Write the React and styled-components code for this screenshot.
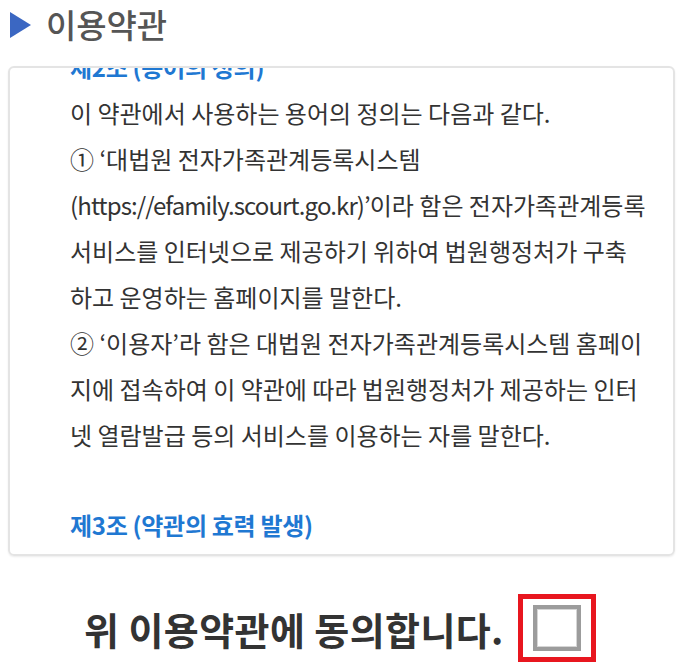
import React, { useEffect, useRef } from "react";
import styled, { createGlobalStyle } from "styled-components";

const GlobalStyle = createGlobalStyle`
  html, body {
    margin: 0;
    padding: 0;
    background: #fff;
  }
  body {
    font-family: "Noto Sans CJK KR", "Noto Sans", sans-serif;
    color: #333;
  }
`;

const Page = styled.div`
  width: 680px;
  height: 670px;
  overflow: hidden;
  display: flex;
  flex-direction: column;
`;

const Header = styled.div`
  display: flex;
  align-items: center;
  height: 50px;
  padding-left: 10px;
`;

// 파란 삼각형 마커
const Marker = styled.span`
  width: 0;
  height: 0;
  border-top: 13px solid transparent;
  border-bottom: 13px solid transparent;
  border-left: 21px solid #3b67c2;
  margin-right: 15px;
`;

const Title = styled.h1`
  margin: 0 0 2px;
  font-size: 33px;
  font-weight: 500;
  color: #555;
  letter-spacing: -0.1px;
`;

const TermsBox = styled.div`
  position: relative;
  margin: 16px 5px 0 8px;
  height: 486px;
  border: 2px solid #e4e4e4;
  border-radius: 6px;
  box-shadow: 0 1px 2px rgba(0, 0, 0, 0.08);
  overflow-y: auto;
  padding: 0 20px 0 60px;
  scrollbar-width: none;
  &::-webkit-scrollbar {
    display: none;
  }
`;

const Article = styled.section`
  & + & {
    margin-top: 44px;
  }
`;

const ArticleTitle = styled.h2`
  margin: 0;
  font-size: 24px;
  font-weight: 700;
  line-height: 46px;
  color: #1f78d2;
  letter-spacing: -0.3px;
`;

const Line = styled.div`
  font-size: 24px;
  line-height: 46px;
  color: #333;
  letter-spacing: 0;
  white-space: nowrap;
`;

// 주소 부분은 좁게 표시
const Url = styled.span`
  letter-spacing: -0.9px;
`;

const AgreeRow = styled.div`
  display: flex;
  align-items: center;
  justify-content: center;
  margin-top: 38px;
  gap: 14px;
`;

const AgreeText = styled.span`
  font-size: 38px;
  font-weight: 700;
  color: #333;
  letter-spacing: 0.4px;
`;

// 강조 표시된 빨간 테두리
const Highlight = styled.label`
  display: flex;
  align-items: center;
  justify-content: center;
  width: 68px;
  height: 58px;
  border: 5px solid #e8161f;
  cursor: pointer;
`;

const CheckBox = styled.span`
  width: 40px;
  height: 38px;
  border: 4px solid #9c9c9c;
  box-shadow: inset 0 0 0 1px #d6d6d6;
  background: #fff;
`;

const articles = [
  {
    title: "제1조 (목적)",
    lines: [
      "이 약관은 법원행정처가 제공하는 대법원 전자가족",
      "관계등록시스템 인터넷 서비스의 이용조건 및 절차",
      "에 관한 사항을 규정함을 목적으로 한다.",
    ],
  },
  {
    title: "제2조 (용어의 정의)",
    current: true,
    lines: [
      "이 약관에서 사용하는 용어의 정의는 다음과 같다.",
      "① ‘대법원 전자가족관계등록시스템",
      <>
        <Url>(https://efamily.scourt.go.kr)’</Url>이라 함은 전자가족관계등록
      </>,
      "서비스를 인터넷으로 제공하기 위하여 법원행정처가 구축",
      "하고 운영하는 홈페이지를 말한다.",
      "② ‘이용자’라 함은 대법원 전자가족관계등록시스템 홈페이",
      "지에 접속하여 이 약관에 따라 법원행정처가 제공하는 인터",
      "넷 열람발급 등의 서비스를 이용하는 자를 말한다.",
    ],
  },
  {
    title: "제3조 (약관의 효력 발생)",
    lines: [
      "① 이 약관은 홈페이지에 게시하여 공시함으로써 효력이",
      "발생한다.",
    ],
  },
];

const App = () => {
  const boxRef = useRef(null);
  const currentRef = useRef(null);

  // 제2조가 상단에 걸치도록 스크롤
  useEffect(() => {
    if (boxRef.current && currentRef.current) {
      boxRef.current.scrollTop = currentRef.current.offsetTop + 24;
    }
  }, []);

  return (
    <Page>
      <GlobalStyle />
      <Header>
        <Marker />
        <Title>이용약관</Title>
      </Header>
      <TermsBox ref={boxRef}>
        {articles.map((a) => (
          <Article key={a.title} ref={a.current ? currentRef : null}>
            <ArticleTitle>{a.title}</ArticleTitle>
            {a.lines.map((l, i) => (
              <Line key={i}>{l}</Line>
            ))}
          </Article>
        ))}
      </TermsBox>
      <AgreeRow>
        <AgreeText>위 이용약관에 동의합니다.</AgreeText>
        <Highlight>
          <CheckBox />
        </Highlight>
      </AgreeRow>
    </Page>
  );
};

export default App;
